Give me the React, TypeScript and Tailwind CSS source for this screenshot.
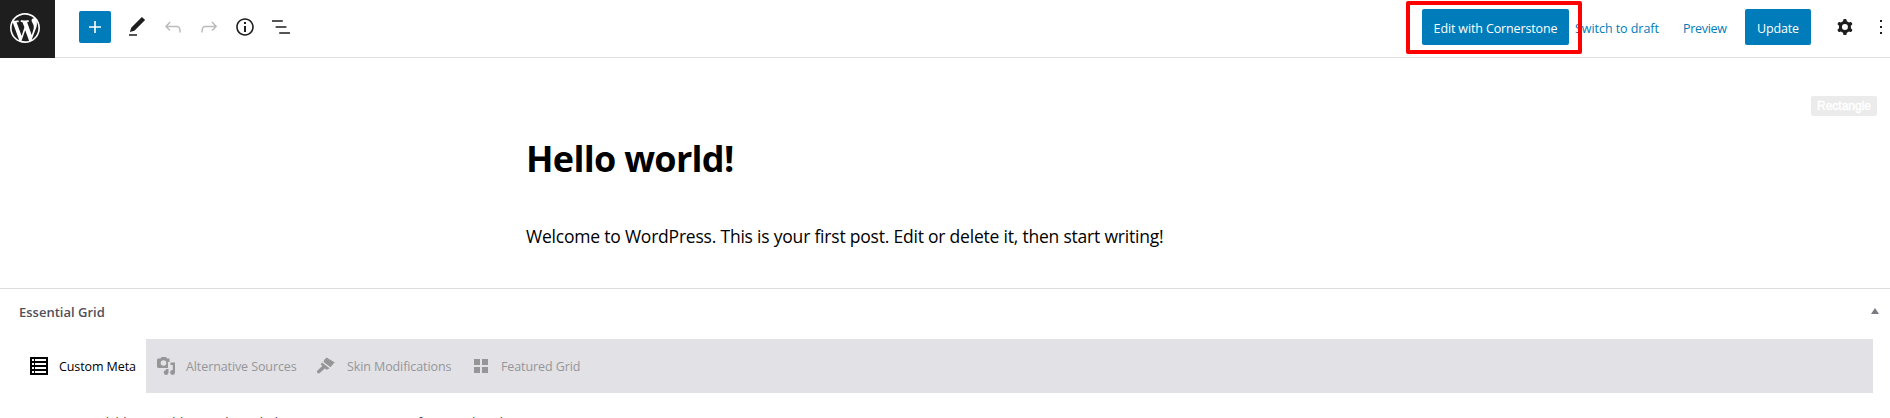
import React from 'react'

const toolIcons = [
  {
    label: 'Tools',
    color: 'text-[#1e1e1e]',
    path: 'M20.1 5.1L16.9 2 6.2 12.7l-1.3 4.4 4.5-1.3L20.1 5.1zM4 20.8h8v-1.5H4v1.5z',
  },
  {
    label: 'Undo',
    color: 'text-[#bbbbbb]',
    path: 'M18.3 11.7c-.6-.6-1.4-.9-2.3-.9H6.7l2.9-3.3-1.1-1-4.5 5L8.5 16l1-1-2.7-2.7H16c.5 0 .9.2 1.3.5 1 1 1 3.4 1 4.5v.3h1.5v-.2c0-1.5 0-4.3-1.5-5.7z',
  },
  {
    label: 'Redo',
    color: 'text-[#bbbbbb]',
    path: 'M15.6 6.5l-1.1 1 2.9 3.3H8c-.9 0-1.7.3-2.3.9-1.4 1.5-1.4 4.2-1.4 5.6v.2h1.5v-.3c0-1.1 0-3.5 1-4.5.3-.3.7-.5 1.3-.5h9.2L14.5 15l1.1 1.1 4.6-4.6-4.6-5z',
  },
  {
    label: 'Details',
    color: 'text-[#1e1e1e]',
    path: 'M12 3.2c-4.8 0-8.8 3.9-8.8 8.8 0 4.8 3.9 8.8 8.8 8.8 4.8 0 8.8-3.9 8.8-8.8 0-4.8-4-8.8-8.8-8.8zm0 16c-4 0-7.2-3.3-7.2-7.2C4.8 8 8 4.8 12 4.8s7.2 3.3 7.2 7.2c0 4-3.2 7.2-7.2 7.2zM11 17h2v-6h-2v6zm0-8h2V7h-2v2z',
  },
  {
    label: 'List view',
    color: 'text-[#1e1e1e]',
    path: 'M13.8 5.2H3v1.5h10.8V5.2zm-3.6 12v1.5H21v-1.5H10.2zm7.2-6H6.6v1.5h10.8v-1.5z',
  },
]

function WordPressLogo() {
  return (
    <svg viewBox="-2 -2 24 24" className="w-9 h-9 -ml-[5px] mb-[2px]" fill="currentColor">
      <path d="M20 10c0-5.51-4.49-10-10-10C4.48 0 0 4.49 0 10c0 5.52 4.48 10 10 10 5.51 0 10-4.48 10-10zM7.78 15.37L4.37 6.22c.55-.02 1.17-.08 1.17-.08.5-.06.44-1.13-.06-1.11 0 0-1.45.11-2.37.11-.18 0-.37 0-.58-.01C4.12 2.69 6.87 1.11 10 1.11c2.33 0 4.45.87 6.05 2.34-.68-.11-1.65.39-1.65 1.58 0 .74.45 1.36.9 2.1.35.61.55 1.36.55 2.46 0 1.49-1.4 5-1.4 5l-3.03-8.37c.54-.02.82-.17.82-.17.5-.05.44-1.25-.06-1.22 0 0-1.44.12-2.38.12-.87 0-2.33-.12-2.33-.12-.5-.03-.56 1.2-.06 1.22l.92.08 1.26 3.41zM17.41 10c.24-.64.74-1.87.43-4.25.7 1.29 1.05 2.71 1.05 4.25 0 3.29-1.73 6.24-4.4 7.78.97-2.59 1.94-5.2 2.92-7.78zM6.1 18.09C3.12 16.65 1.11 13.53 1.11 10c0-1.3.23-2.48.72-3.59C3.25 10.3 4.67 14.2 6.1 18.09zm4.03-6.63l2.58 6.98c-.86.29-1.76.45-2.71.45-.79 0-1.57-.11-2.29-.33.81-2.38 1.62-4.74 2.42-7.1z" />
    </svg>
  )
}

function Header() {
  return (
    <header className="flex h-[58px] border-b border-[#e0e0e0]">
      <div className="flex items-center justify-center w-[55px] h-[58px] shrink-0 bg-[#1e1e1e] text-white">
        <WordPressLogo />
      </div>

      <div className="flex items-center h-[54px] pl-6">
        <button className="flex items-center justify-center w-8 h-8 mr-2 rounded-[2px] bg-[#007cba] text-white">
          <svg viewBox="0 0 24 24" className="w-6 h-6" fill="currentColor">
            <path d="M18 11.2h-5.2V6h-1.6v5.2H6v1.6h5.2V18h1.6v-5.2H18z" />
          </svg>
        </button>
        {toolIcons.map((icon) => (
          <button
            key={icon.label}
            aria-label={icon.label}
            className={`flex items-center justify-center w-9 h-9 ${icon.color}`}
          >
            <svg viewBox="0 0 24 24" className="w-6 h-6" fill="currentColor">
              <path d={icon.path} />
            </svg>
          </button>
        ))}
      </div>

      <div className="flex items-center h-[54px] ml-auto text-[12.5px] whitespace-nowrap">
        <div className="relative mr-[6px]">
          <button className="flex items-center justify-center w-[147px] h-9 pt-[4px] rounded-[2px] bg-[#007cba] text-white tracking-[-0.13px]">
            Edit with Cornerstone
          </button>
          {/* Highlight frame around the button */}
          <div className="absolute z-10 -left-4 -top-2 w-[176px] h-[53px] rounded-[2px] border-4 border-[#ff0000]" />
        </div>
        <button className="w-[84px] mr-6 pt-[4px] text-left text-[#007cba] tracking-[-0.05px]">Switch to draft</button>
        <button className="w-[44px] mr-[18px] pt-[4px] text-left text-[#007cba] tracking-[-0.3px]">Preview</button>
        <button className="flex items-center justify-center w-[66px] h-9 pt-[4px] rounded-[2px] bg-[#007cba] text-white font-medium tracking-[-0.15px]">
          Update
        </button>
        <button aria-label="Settings" className="ml-[22px]">
          <svg viewBox="0 0 24 24" className="w-6 h-6 text-[#1e1e1e]" fill="currentColor">
            <path
              fillRule="evenodd"
              clipRule="evenodd"
              d="M10.289 4.836A1 1 0 0111.275 4h1.306a1 1 0 01.987.836l.244 1.466c.787.26 1.503.679 2.108 1.218l1.393-.522a1 1 0 011.216.437l.653 1.13a1 1 0 01-.23 1.273l-1.148.944a6.025 6.025 0 010 2.435l1.149.946a1 1 0 01.23 1.272l-.653 1.13a1 1 0 01-1.216.437l-1.394-.522c-.605.54-1.32.958-2.108 1.218l-.244 1.466a1 1 0 01-.987.836h-1.306a1 1 0 01-.986-.836l-.244-1.466a5.995 5.995 0 01-2.108-1.218l-1.394.522a1 1 0 01-1.217-.436l-.653-1.131a1 1 0 01.23-1.272l1.149-.946a6.026 6.026 0 010-2.435l-1.148-.944a1 1 0 01-.23-1.272l.653-1.131a1 1 0 011.217-.437l1.393.522a5.994 5.994 0 012.108-1.218l.244-1.466zM14.929 12a3 3 0 11-6 0 3 3 0 016 0z"
            />
          </svg>
        </button>
        <button aria-label="Options" className="flex flex-col gap-1 w-[2px] ml-[23px] mr-[8px]">
          <span className="w-[2px] h-[2px] bg-[#1e1e1e]" />
          <span className="w-[2px] h-[2px] bg-[#1e1e1e]" />
          <span className="w-[2px] h-[2px] bg-[#1e1e1e]" />
        </button>
      </div>
    </header>
  )
}

const tabs = [
  {
    label: 'Alternative Sources',
    width: 'w-[160px]',
    icon: (
      <svg viewBox="0 0 18 18" className="w-[18px] h-[18px] mr-[11px]" fill="currentColor">
        <path
          fillRule="evenodd"
          d="M1 1.500H3.500L4.500 0h4.500l1 1.500H12.500V5H11V11H1L0 10V2.500zM6.500 3.200a2.800 2.800 0 1 0 0 5.600 2.800 2.800 0 0 0 0-5.600z"
        />
        <path d="M13.500 5.500H18v10a2.400 2.400 0 1 1-2.200-2.400V8h-2.300zM9 12h2.500v3.500A2.400 2.400 0 1 1 9 13.100z" />
      </svg>
    ),
  },
  {
    label: 'Skin Modifications',
    width: 'w-[157px]',
    icon: (
      <svg viewBox="0 0 18 18" className="w-[18px] h-[18px] mr-[12px]" fill="currentColor">
        <path d="M7.500 2.500L9.800.6l1.700 1.200L18 5.500l-1 .5-3.500 4.300L6.500 5z" />
        <path d="M5 5.500l7.500 5.700-2.700 1.600-2-1.300-5.300 4.800H.3L0 14l5.200-5-1.500-1.800z" />
      </svg>
    ),
  },
  {
    label: 'Featured Grid',
    width: 'w-[130px]',
    icon: (
      <svg viewBox="0 0 14 14" className="w-[14px] h-[14px] mr-[13px]" fill="currentColor">
        <path d="M0 0h6v6H0zM8 0h6v6H8zM0 8h6v6H0zM8 8h6v6H8z" />
      </svg>
    ),
  },
]

function MetaBox() {
  return (
    <section className="border-t border-[#dcdcde]">
      <div className="flex items-center justify-between h-[45px] mb-[5px] pl-[19px] pr-[11px]">
        <h2 className="pt-px text-[13px] leading-5 font-semibold text-[#50505a]">Essential Grid</h2>
        <svg viewBox="0 0 8 6" className="w-2 h-[6px] mb-px" fill="#787c82">
          <path d="M4 0l4 6H0z" />
        </svg>
      </div>

      <div className="flex h-[54px] mr-[17px] bg-[#e1e1e6] text-[12.5px] tracking-[-0.1px] whitespace-nowrap">
        <div className="flex items-center w-[146px] pl-[30px] bg-white text-black">
          <svg viewBox="0 0 18 18" className="w-[18px] h-[18px] mr-[11px]" shapeRendering="crispEdges">
            <path fill="currentColor" d="M0 0h18v18H0z" />
            <path
              fill="#fff"
              d="M2 2h2v2H2zM5 2h11v2H5zM2 6h2v2H2zM5 6h11v2H5zM2 10h2v2H2zM5 10h11v2H5zM2 14h2v2H2zM5 14h11v2H5z"
            />
          </svg>
          <span className="pt-[2px]">Custom Meta</span>
        </div>
        <div className="flex items-center pl-[11px] text-[#969699]">
          {tabs.map((tab) => (
            <div key={tab.label} className={`flex items-center ${tab.width}`}>
              {tab.icon}
              <span className="pt-[2px]">{tab.label}</span>
            </div>
          ))}
        </div>
      </div>

      <p className="pt-[19px] pl-[24px] text-[13px] leading-5 text-[#3c434a] tracking-[-0.33px] whitespace-nowrap">
        No metas available yet. Add some through the Custom Meta menu of Essential Grid.
      </p>
    </section>
  )
}

export default function App() {
  return (
    <div className="w-full h-[418px] overflow-hidden bg-white font-['Open_Sans','Noto_Sans',sans-serif]">
      <Header />

      <main className="h-[230px]">
        <div className="flex justify-end h-[58px] pt-[38px] pr-[13px]">
          <span className="flex items-center justify-center w-[66px] h-5 rounded-[2px] bg-[#ebebeb] text-white text-[12px] font-['Liberation_Sans',sans-serif] [-webkit-text-stroke:0.5px_white]">
            Rectangle
          </span>
        </div>
        <div className="pl-[526px] whitespace-nowrap">
          <h1 className="pt-[18px] text-[36px] leading-[50px] font-bold text-black tracking-[-0.7px]">Hello world!</h1>
          <p className="pt-[36px] text-[17.5px] leading-8 text-black tracking-[-0.21px]">
            Welcome to WordPress. This is your first post. Edit or delete it, then start writing!
          </p>
        </div>
      </main>

      <MetaBox />
    </div>
  )
}
